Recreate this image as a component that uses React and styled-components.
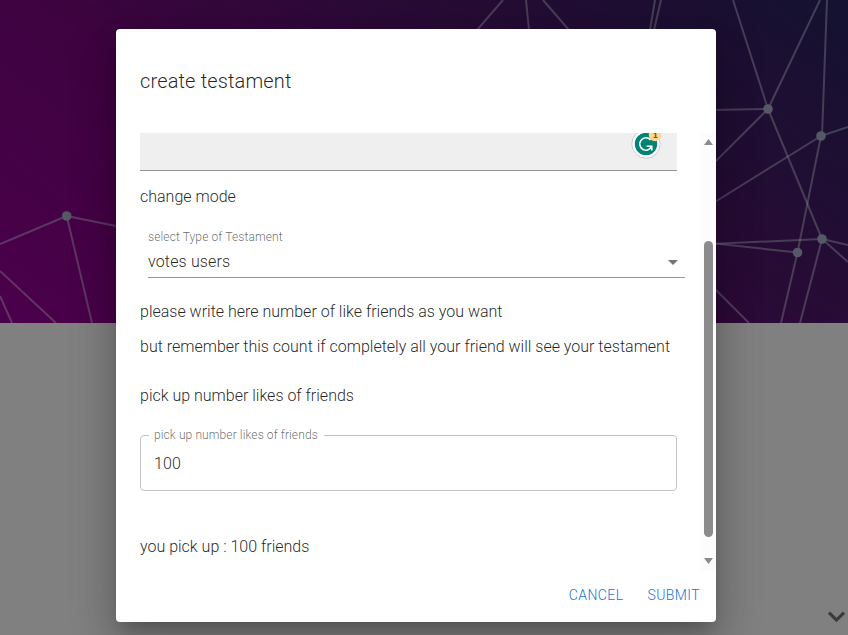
import React from "react";
import styled, { createGlobalStyle } from "styled-components";

const GlobalStyle = createGlobalStyle`
  *, *::before, *::after { box-sizing: border-box; }
  body {
    margin: 0;
    overflow: hidden;
    font-family: Roboto, "Liberation Sans", sans-serif;
    font-weight: 300;
    color: rgba(0, 0, 0, 0.87);
  }
`;

const Page = styled.div`
  position: relative;
  height: 635px;
  background: #808080;
`;

const Hero = styled.div`
  height: 323px;
  background: linear-gradient(38deg, #4b004b 0%, #3f0341 34%, #280b35 65%, #141230 100%);
`;

const Network = styled.svg`
  display: block;
`;

const ScrollHint = styled.svg`
  position: absolute;
  right: 2px;
  bottom: 11px;
`;

const Overlay = styled.div`
  position: absolute;
  inset: 0;
  display: flex;
  align-items: flex-start;
  padding: 29px 132px 0 116px;
`;

const Dialog = styled.section`
  display: flex;
  flex-direction: column;
  width: 600px;
  height: 593px;
  background: #fff;
  border-radius: 4px;
  overflow: hidden;
  box-shadow: 0 11px 15px -7px rgba(0, 0, 0, 0.2),
    0 24px 38px 3px rgba(0, 0, 0, 0.14), 0 9px 46px 8px rgba(0, 0, 0, 0.12);
`;

const Title = styled.h2`
  flex: none;
  height: 104px;
  margin: 0;
  padding: 36px 24px;
  font-size: 20px;
  font-weight: 300;
  line-height: 32px;
  letter-spacing: 0.15px;
`;

const Body = styled.div`
  display: flex;
  height: 437px;
`;

const Content = styled.div`
  flex: 1;
  padding: 0 24px;
  overflow: hidden;
`;

const FilledField = styled.div`
  display: flex;
  justify-content: flex-end;
  width: 537px;
  height: 38px;
  padding-right: 16px;
  background: #efefef;
  border-bottom: 1px solid #949494;
`;

const Assistant = styled.svg`
  flex: none;
`;

const Text = styled.p`
  margin: ${({ $gap }) => $gap}px 0 0;
  font-size: 16px;
  line-height: 24px;
  white-space: nowrap;
`;

const Select = styled.div`
  width: 537px;
  height: 50px;
  margin: 19px 0 0 8px;
  border-bottom: 1px solid #949494;
`;

const Label = styled.div`
  font-size: 12px;
  line-height: 18px;
  letter-spacing: 0.11px;
  color: rgba(0, 0, 0, 0.6);
`;

const SelectValue = styled.div`
  display: flex;
  align-items: center;
  justify-content: space-between;
  height: 31px;
  font-size: 16px;
  letter-spacing: 0.15px;
`;

const OutlinedField = styled.fieldset`
  width: 537px;
  height: 65px;
  margin: 18px 0 0;
  padding: 0 13px;
  border: 1px solid #c4c4c4;
  border-radius: 4px;
`;

const Legend = styled.legend`
  height: 18px;
  margin-left: -5px;
  padding: 0 6px 0 5px;
  font-size: 12px;
  line-height: 18px;
  letter-spacing: 0.11px;
  color: rgba(0, 0, 0, 0.6);
`;

const FieldValue = styled.div`
  padding-top: 8px;
  font-size: 16px;
  line-height: 24px;
  letter-spacing: 0.15px;
`;

const Scrollbar = styled.div`
  display: flex;
  flex-direction: column;
  align-items: center;
  width: 15px;
  padding: 6px 0;
  background: #fcfcfc;
`;

const Arrow = styled.svg`
  flex: none;
  fill: #8b8b8b;
`;

const Thumb = styled.div`
  width: 9px;
  height: 296px;
  margin: 96px 0 21px;
  border-radius: 5px;
  background: #8b8b8b;
`;

const Actions = styled.div`
  display: flex;
  justify-content: flex-end;
  gap: 8px;
  padding: 7px 8px;
`;

const Button = styled.button`
  padding: 6px 8px;
  border: 0;
  background: none;
  font: 300 14px/24.5px Roboto, "Liberation Sans", sans-serif;
  letter-spacing: 0.4px;
  text-transform: uppercase;
  color: #1976d2;
`;

const edges = [
  [66.7, 216, 0, 244], [66.7, 216, 126, 228], [66.7, 216, 92, 323],
  [0, 271, 56, 323], [0, 296, 12, 323],
  [503, 0, 477, 30], [526, 0, 529, 30], [543, 0, 569, 30],
  [655, 0, 650, 30], [661, 0, 654, 30],
  [733, 0, 768, 109], [820, 0, 768, 109], [827, 0, 822, 136],
  [710, 110, 768, 109], [712, 165, 768, 109], [821, 136, 848, 127],
  [821, 136, 710, 205], [768, 109, 822, 239], [821, 136, 797.5, 252.5],
  [797.5, 252.5, 781, 323], [822, 239, 800, 323], [822, 239, 710, 244],
  [797.5, 252.5, 710, 243], [822, 239, 848, 245], [822, 239, 848, 262],
  [712, 286, 749, 323],
];

const nodes = [[66.7, 216], [768, 109], [821, 136], [822, 239], [797.5, 252.5]];

export default function App() {
  return (
    <>
      <GlobalStyle />
      <Page>
        <Hero>
          <Network width="848" height="323" viewBox="0 0 848 323">
            <g stroke="#83858b" strokeOpacity="0.4" strokeWidth="2">
              {edges.map(([x1, y1, x2, y2], i) => (
                <line key={i} x1={x1} y1={y1} x2={x2} y2={y2} />
              ))}
            </g>
            {nodes.map(([cx, cy], i) => (
              <circle key={i} cx={cx} cy={cy} r="4.8" fill="#565866" />
            ))}
          </Network>
        </Hero>
        <ScrollHint width="20" height="14" viewBox="0 0 20 14">
          <path d="M3 2.6l7.5 7.5L18 2.6" fill="none" stroke="#3b3b3b" strokeWidth="3.2" />
        </ScrollHint>
        <Overlay>
          <Dialog role="dialog">
            <Title>create testament</Title>
            <Body>
              <Content>
                <FilledField>
                  <Assistant width="30" height="27" viewBox="0 0 30 27">
                    <circle cx="15" cy="11" r="14.2" fill="#fff" stroke="#c3c6d8" strokeWidth="0.9" />
                    <circle cx="15" cy="11" r="11.2" fill="#028475" />
                    <path
                      d="M19.6 6.9A6.2 6.2 0 1 0 20.6 13.6M15.6 13.2h5.2v4.4"
                      fill="none"
                      stroke="#fff"
                      strokeWidth="1.6"
                    />
                    <circle cx="24" cy="2" r="6.2" fill="#ffd792" />
                    <text x="24.3" y="5" textAnchor="middle" fontFamily="DejaVu Sans" fontSize="7.5" fontWeight="700" fill="#80530c">1</text>
                  </Assistant>
                </FilledField>
                <Text $gap={14}>change mode</Text>
                <Select>
                  <Label>select Type of Testament</Label>
                  <SelectValue>
                    votes users
                    <svg width="24" height="24" viewBox="0 0 24 24" fill="#757575">
                      <path d="M7 10l5 5 5-5z" />
                    </svg>
                  </SelectValue>
                </Select>
                <Text $gap={22}>please write here number of like friends as you want</Text>
                <Text $gap={11}>but remember this count if completely all your friend will see your testament</Text>
                <Text $gap={25}>pick up number likes of friends</Text>
                <OutlinedField>
                  <Legend>pick up number likes of friends</Legend>
                  <FieldValue>100</FieldValue>
                </OutlinedField>
                <Text $gap={44}>you pick up : 100 friends</Text>
              </Content>
              <Scrollbar>
                <Arrow width="9" height="6" viewBox="0 0 9 6"><path d="M0 6L4.5 0 9 6z" /></Arrow>
                <Thumb />
                <Arrow width="9" height="6" viewBox="0 0 9 6"><path d="M0 0h9L4.5 6z" /></Arrow>
              </Scrollbar>
            </Body>
            <Actions>
              <Button>Cancel</Button>
              <Button>Submit</Button>
            </Actions>
          </Dialog>
        </Overlay>
      </Page>
    </>
  );
}
